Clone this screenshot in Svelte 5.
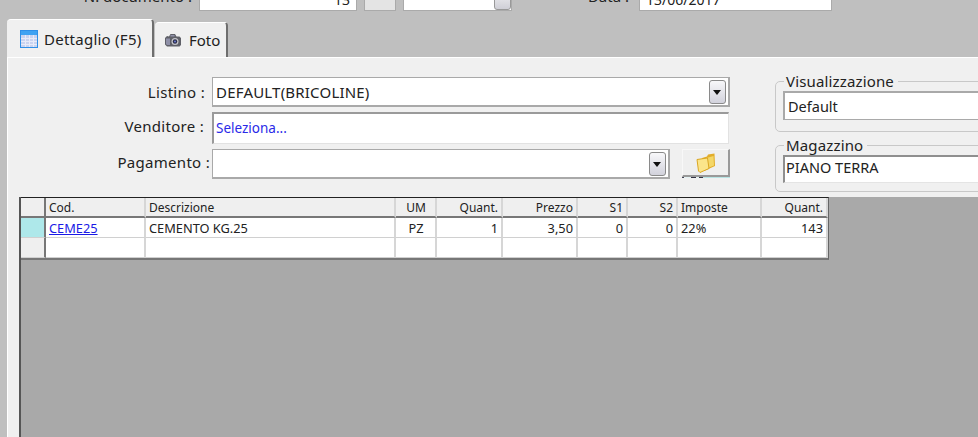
<script>
  const columns = [
    { name: "Cod.", width: 100 },
    { name: "Descrizione", width: 250 },
    { name: "UM", width: 41, center: true },
    { name: "Quant.", width: 66, right: true },
    { name: "Prezzo", width: 75, right: true },
    { name: "S1", width: 50, right: true },
    { name: "S2", width: 50, right: true },
    { name: "Imposte", width: 84 },
    { name: "Quant.", width: 66, right: true }
  ]
  const row = ["CEME25", "CEMENTO KG.25", "PZ", "1", "3,50", "0", "0", "22%", "143"]
</script>

<main>
  <div class="strip">
    <span class="toplabel first">N. documento :</span>
    <div class="topinput num">13</div>
    <div class="topbtn"></div>
    <div class="topspin"><span class="thumb"></span></div>
    <span class="toplabel second">Data :</span>
    <div class="topinput date">13/06/2017</div>
  </div>

  <div class="tabs">
    <div class="tab active">
      <svg width="18" height="18" viewBox="0 0 18 18">
        <rect x="0.5" y="0.5" width="17" height="17" fill="#c9d3f0" stroke="#2f8fe8" />
        <rect x="1" y="1" width="16" height="4" fill="#3fa2f2" />
        <path d="M1 8.500H17M1 11.500H17M1 14.500H17M5.500 5V17M9.500 5V17M13.500 5V17" stroke="#e8ebf8" />
      </svg>
      Dettaglio (F5)
    </div>
    <div class="tab">
      <svg width="18" height="16" viewBox="0 0 18 16">
        <path d="M1 6 3 4 5 4.500 6.500 2H11L12.500 4.500H15.500L17 6V13L15.500 14.500H3L1 12.500Z" fill="#5f6068" />
        <path d="M2 6.500H6V13H3L2 12ZM6.500 3H10.500V4.500H6.500Z" fill="#8f90a8" />
        <circle cx="11" cy="9.500" r="3.500" fill="#c4c4ca" />
        <circle cx="11" cy="9.500" r="2.200" fill="#2a2c48" />
        <circle cx="11" cy="9.500" r="1" fill="#6a78d0" />
      </svg>
      Foto
    </div>
  </div>

  <section class="panel">
    <div class="head">
      <div class="form">
        <label class="lbl listino" for="listino">Listino :</label>
        <div class="combo listino-box" id="listino">
          <span class="val">DEFAULT(BRICOLINE)</span>
          <span class="drop"></span>
        </div>

        <label class="lbl venditore" for="venditore">Venditore :</label>
        <div class="seller" id="venditore">Seleziona...</div>

        <label class="lbl pagamento" for="pagamento">Pagamento :</label>
        <div class="payrow" id="pagamento">
          <div class="combo pay"><span class="val"></span><span class="drop"></span></div>
          <button class="folder" aria-label="Sfoglia">
            <svg width="20" height="20" viewBox="0 0 20 20">
              <path d="M6 5 11 3.500 12 1.500 18.500 0.500 19 13 8 18Z" fill="#e2ad2a" />
              <path d="M7 6 17.500 3 18 12.500 8 16.500Z" fill="#f4d768" />
              <path d="M1 6.500 11.500 5 13 15.500 4 19.500 2.500 18Z" fill="#fbe58a" stroke="#dba722" />
            </svg>
          </button>
        </div>
      </div>

      <div class="side">
        <fieldset class="group vis">
          <legend>Visualizzazione</legend>
          <div class="sideinput">Default</div>
        </fieldset>
        <fieldset class="group mag">
          <legend>Magazzino</legend>
          <div class="sideinput sunken">PIANO TERRA</div>
        </fieldset>
      </div>
    </div>

    <div class="gridarea">
      <table>
        <thead>
          <tr>
            <th class="rowhead"></th>
            {#each columns as c}
              <th style="width: {c.width}px" class:right={c.right} class:center={c.center}>{c.name}</th>
            {/each}
          </tr>
        </thead>
        <tbody>
          <tr>
            <th class="rowhead current"></th>
            {#each row as v, i}
              <td class:right={columns[i].right} class:center={columns[i].center}>
                {#if i == 0}<a href="#top">{v}</a>{:else}{v}{/if}
              </td>
            {/each}
          </tr>
          <tr>
            <th class="rowhead"></th>
            {#each row as v}
              <td></td>
            {/each}
          </tr>
        </tbody>
      </table>
    </div>
  </section>
</main>

<style>
  :global(body) {
    margin: 0;
    background: #bfbfbf;
  }
  main {
    width: 978px;
    height: 437px;
    overflow: hidden;
    font-family: "Noto Sans", "DejaVu Sans", sans-serif;
    font-size: 15px;
    color: #222;
    display: flex;
    flex-direction: column;
  }

  .strip {
    height: 11px;
    flex: none;
    display: flex;
    align-items: flex-end;
    overflow: hidden;
  }
  .strip > * {
    flex: none;
    box-sizing: border-box;
  }
  .toplabel {
    line-height: 20px;
    height: 20px;
    margin-bottom: 5px;
    text-align: right;
    white-space: nowrap;
  }
  .toplabel.first {
    width: 192px;
    margin-right: 7px;
  }
  .toplabel.second {
    width: 117px;
    margin-right: 10px;
  }
  .topinput {
    height: 22px;
    background: #fff;
    border: 1px solid #aaa;
    line-height: 19px;
    padding: 0 6px;
    font-size: 14px;
  }
  .topinput.num {
    width: 158px;
    text-align: right;
  }
  .topinput.date {
    width: 193px;
  }
  .topbtn {
    width: 32px;
    height: 22px;
    margin-left: 7px;
    background: #e4e4e4;
    border: 1px solid #aaa;
  }
  .topspin {
    width: 109px;
    height: 22px;
    margin-left: 7px;
    background: #fff;
    border: 1px solid #aaa;
    display: flex;
    justify-content: flex-end;
  }
  .thumb {
    width: 17px;
    height: 20px;
    background: linear-gradient(#f2f2f4, #cfcfd6);
    border: 1px solid #999;
    border-radius: 3px;
    box-sizing: border-box;
  }

  .tabs {
    display: flex;
    align-items: flex-end;
    margin: 8px 0 0 7px;
    height: 38px;
    flex: none;
  }
  .tab {
    height: 35px;
    box-sizing: border-box;
    width: 73px;
    background: #f0f0f0;
    border-top: 1px solid #fff;
    border-right: 2px solid #6e6e6e;
    border-radius: 4px 4px 0 0;
    display: flex;
    align-items: center;
    gap: 7px;
    padding-left: 9px;
    margin-left: 1px;
  }
  .tab.active {
    height: 38px;
    width: 147px;
    padding: 0 0 0 13px;
    margin-left: 0;
    gap: 6px;
    letter-spacing: 0.25px;
  }

  .panel {
    flex: 1;
    margin-left: 7px;
    background: #f0f0f0;
    border-left: 1px solid #fff;
    border-top: 1px solid #fff;
    display: flex;
    flex-direction: column;
    min-height: 0;
  }

  .head {
    display: flex;
    height: 139px;
    flex: none;
    box-sizing: border-box;
    padding-top: 19px;
  }
  .form {
    width: 722px;
    flex: none;
    display: grid;
    grid-template-columns: 204px 518px;
    grid-template-rows: 30px 32px 30px;
    row-gap: 5px;
    align-content: start;
  }
  .lbl {
    text-align: right;
    padding-right: 7px;
    line-height: 30px;
    white-space: nowrap;
    letter-spacing: 0.3px;
  }
  .lbl.venditore {
    padding-right: 8px;
    line-height: 28px;
  }
  .lbl.pagamento {
    padding-right: 2px;
    line-height: 26px;
  }
  .combo,
  .seller {
    background: #fff;
    box-sizing: border-box;
  }
  .combo {
    border: 1px solid #a9a9a9;
    border-bottom-width: 2px;
    border-right-width: 2px;
    display: flex;
    align-items: center;
    justify-content: space-between;
    height: 30px;
  }
  .val {
    padding: 1px 0 0 3px;
    letter-spacing: 0.2px;
  }
  .drop {
    width: 17px;
    height: 24px;
    margin-right: 2px;
    box-sizing: border-box;
    border: 1px solid #8a8a8a;
    border-radius: 3px;
    background: linear-gradient(#f8f8fa, #d2d2dc);
    position: relative;
  }
  .drop::after {
    content: "";
    position: absolute;
    left: 3px;
    top: 9px;
    border: 4px solid transparent;
    border-top: 5px solid #111;
    border-bottom: 0;
  }
  .seller {
    width: 517px;
    height: 32px;
    border: 1px solid #e2e2e2;
    border-top: 2px solid #9a9a9a;
    border-left: 2px solid #9a9a9a;
    color: #2a2ae8;
    font-size: 13.500px;
    line-height: 28px;
    padding-left: 2px;
  }
  .payrow {
    display: flex;
    align-items: flex-start;
    gap: 12px;
  }
  .combo.pay {
    width: 458px;
  }
  .folder {
    width: 48px;
    height: 28px;
    padding: 0;
    background: #efefef;
    border: 1px solid #f8f8f8;
    border-right: 2px solid #999;
    border-bottom: 2px solid #999;
    display: flex;
    align-items: center;
    justify-content: center;
    position: relative;
  }
  /* stray bit of the control behind the button */
  .folder::after {
    content: "";
    position: absolute;
    left: -1px;
    right: -2px;
    bottom: -3px;
    height: 1px;
    background: linear-gradient(90deg, #445 0 2px, #e4f2f2 2px 9px, #334 9px 14px, #e4f2f2 14px 17px, #334 17px 21px, #b8e4e4 21px);
  }

  .side {
    margin-left: 45px;
    flex: 1;
    min-width: 0;
    margin-top: -4px;
    display: flex;
    flex-direction: column;
  }
  .group {
    margin: 0 -20px 0 0;
    padding: 0 7px;
    border: 1px solid #c8c8c8;
    border-radius: 5px;
    box-sizing: border-box;
  }
  .group legend {
    padding: 0 4px 0 2px;
    margin-left: 1px;
    line-height: 16px;
    letter-spacing: 0.15px;
  }
  .group.vis {
    height: 59px;
    margin-bottom: 5px;
  }
  .group.mag {
    height: 55px;
  }
  .sideinput {
    background: #fff;
    border: 1px solid #a9a9a9;
    border-top-width: 2px;
    border-left-width: 2px;
    height: 29px;
    box-sizing: border-box;
    line-height: 26px;
    padding-left: 3px;
    margin-top: 2px;
    font-size: 14.500px;
  }
  .sideinput.sunken {
    height: 28px;
    padding-left: 1px;
    line-height: 21px;
    border-color: #8f8f8f #e4e4e4 #e4e4e4 #8f8f8f;
  }

  .gridarea {
    flex: 1;
    margin-left: 11px;
    background: #a9a9a9;
    border-left: 2px solid #555;
    min-height: 0;
  }
  table {
    border-collapse: separate;
    border-spacing: 0;
    table-layout: fixed;
    width: 808px;
    background: #fff;
    border-top: 1px solid #222;
    border-right: 1px solid #666;
    border-bottom: 2px solid #777;
    font-size: 12px;
  }
  th,
  td {
    box-sizing: border-box;
    height: 20px;
    padding: 0 2px;
    font-weight: normal;
    text-align: left;
    border-right: 2px solid #d6d6d6;
    border-bottom: 1px solid #d0d0d0;
    white-space: nowrap;
    overflow: hidden;
  }
  td {
    font-size: 12.800px;
    padding-left: 3px;
  }
  thead th {
    height: 19px;
    background: #efefef;
    border-bottom: 2px solid #777;
    padding-top: 1px;
    padding-left: 3px;
  }
  th.rowhead {
    width: 25px;
    padding: 0;
    background: #efefef;
    border-right: 2px solid #777;
  }
  th.rowhead.current {
    background: #aee8ea;
  }
  .right {
    text-align: right;
    padding-right: 3px;
  }
  .center {
    text-align: center;
  }
  a {
    color: #1a1ae6;
    text-decoration: underline;
  }
</style>
